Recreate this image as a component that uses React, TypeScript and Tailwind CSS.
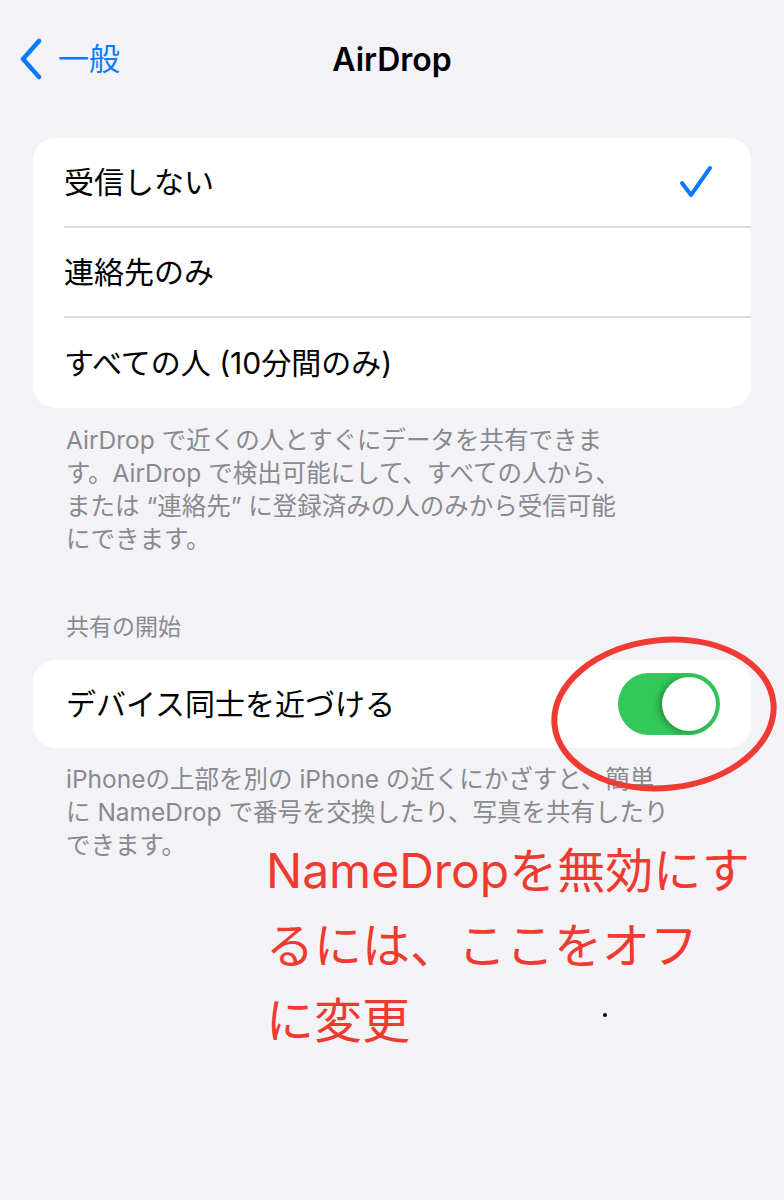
const font = { fontFamily: 'Inter, "Noto Sans CJK JP", sans-serif' };

function Chevron() {
  return (
    <svg width="26" height="42" viewBox="0 0 26 42" fill="none">
      <path d="M21 3 L5 21 L21 39" stroke="#0a7aff" strokeWidth="4.5" strokeLinecap="round" strokeLinejoin="round" />
    </svg>
  );
}

function Check() {
  return (
    <svg width="34" height="34" viewBox="0 0 34 34" fill="none">
      <path d="M3 18 L12 30 L31 3" stroke="#0a7aff" strokeWidth="4" strokeLinecap="round" strokeLinejoin="round" />
    </svg>
  );
}

function Row({ label, checked, last }: { label: string; checked?: boolean; last?: boolean }) {
  return (
    <div className="flex h-[90px] items-stretch pl-[31px]">
      <div className={`flex flex-1 items-center justify-between pr-[38px] ${last ? "" : "border-b-2 border-[#dcdce0]"}`}>
        <span className="text-[30px] text-black">{label}</span>
        {checked && <Check />}
      </div>
    </div>
  );
}

function Toggle() {
  return (
    <div className="flex h-[62px] w-[102px] items-center justify-end rounded-full bg-[#34c759] p-[4px]">
      <div className="h-[54px] w-[54px] rounded-full bg-white shadow-[-3px_1px_6px_rgba(0,0,0,0.3)]" />
    </div>
  );
}

export default function App() {
  return (
    <div className="relative h-[1200px] w-[784px] overflow-hidden bg-[#f2f2f7]" style={font}>
      {/* nav bar */}
      <div className="relative flex h-[116px] items-start pt-[36px]">
        <div className="flex items-center gap-[14px] pl-[18px]">
          <Chevron />
          <span className="text-[31px] text-[#0a7aff]">一般</span>
        </div>
        <div className="absolute left-0 right-0 top-[36px] text-center text-[32px] font-semibold text-black">AirDrop</div>
      </div>

      {/* receiving options */}
      <div className="mx-[33px] mt-[22px] overflow-hidden rounded-[22px] bg-white">
        <Row label="受信しない" checked />
        <Row label="連絡先のみ" />
        <Row label="すべての人 (10分間のみ)" last />
      </div>
      <p className="mx-[66px] mt-[16px] w-[570px] text-[24.5px] leading-[33px] text-[#8a8a8e]">
        AirDrop で近くの人とすぐにデータを共有できます。AirDrop で検出可能にして、すべての人から、または “連絡先” に登録済みの人のみから受信可能にできます。
      </p>

      {/* sharing section */}
      <div className="ml-[66px] mt-[55px] text-[23px] leading-[33px] text-[#8a8a8e]">共有の開始</div>
      <div className="mx-[33px] mt-[16px] flex h-[88px] items-center justify-between rounded-[22px] bg-white pl-[33px] pr-[31px]">
        <span className="text-[30px] text-black">デバイス同士を近づける</span>
        <Toggle />
      </div>
      <p className="mx-[66px] mt-[15px] w-[610px] text-[24.5px] leading-[33px] text-[#8a8a8e]">
        iPhoneの上部を別の iPhone の近くにかざすと、簡単に NameDrop で番号を交換したり、写真を共有したりできます。
      </p>

      {/* annotation */}
      <svg className="absolute left-[540px] top-[626px]" width="250" height="180" viewBox="0 0 250 180" fill="none">
        <ellipse cx="124" cy="88" rx="110" ry="74" transform="rotate(-6 124 88)" stroke="#ef3b33" strokeWidth="6" />
      </svg>
      <div className="absolute left-[266px] top-[833px] text-[48px] leading-[75px] text-[#ee3a2f]">
        NameDropを無効にす
        <br />
        るには、ここをオフ
        <br />
        に変更
      </div>
      <div className="absolute left-[603px] top-[1013px] h-[4px] w-[4px] rounded-full bg-black" />
    </div>
  );
}
